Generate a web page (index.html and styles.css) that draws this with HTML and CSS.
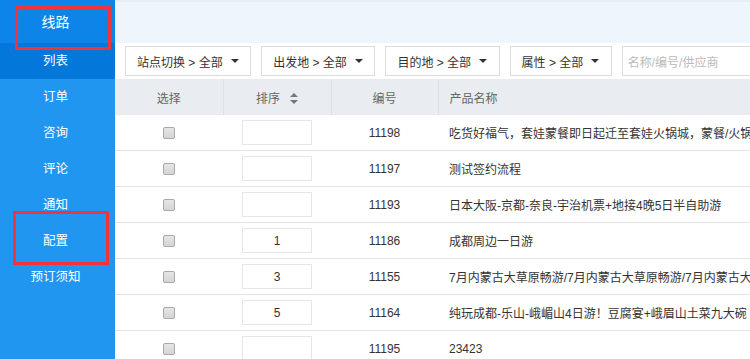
FILE: index.html
```html
<!DOCTYPE html>
<html lang="zh">
<head>
<meta charset="utf-8">
<title>线路列表</title>
<link rel="stylesheet" href="styles.css">
</head>
<body>
<div class="app">
  <nav class="sidebar">
    <div class="nav-head">线路</div>
    <div class="nav-item nav-active">列表</div>
    <div class="nav-item">订单</div>
    <div class="nav-item">咨询</div>
    <div class="nav-item">评论</div>
    <div class="nav-item">通知</div>
    <div class="nav-item">配置</div>
    <div class="nav-item">预订须知</div>
    <span class="mark mark-1"></span>
    <span class="mark mark-2"></span>
  </nav>
  <main class="main">
    <div class="topband"></div>
    <div class="filters">
      <div class="filter">站点切换 &gt; 全部<span class="caret"></span></div>
      <div class="filter">出发地 &gt; 全部<span class="caret"></span></div>
      <div class="filter">目的地 &gt; 全部<span class="caret"></span></div>
      <div class="filter">属性 &gt; 全部<span class="caret"></span></div>
      <div class="search">名称/编号/供应商</div>
    </div>
    <table class="grid">
      <colgroup>
        <col class="c1"><col class="c2"><col class="c3"><col class="c4">
      </colgroup>
      <thead>
        <tr>
          <th>选择</th>
          <th>排序<svg class="sort" width="8" height="11" viewBox="0 0 8 11"><path d="M4 0L8 4H0Z M4 11L0 7H8Z" fill="#777"/></svg></th>
          <th>编号</th>
          <th class="left">产品名称</th>
        </tr>
      </thead>
      <tbody>
        <tr><td><span class="cb"></span></td><td><span class="ord"></span></td><td>11198</td><td class="left">吃货好福气，套娃蒙餐即日起迁至套娃火锅城，蒙餐/火锅</td></tr>
        <tr><td><span class="cb"></span></td><td><span class="ord"></span></td><td>11197</td><td class="left">测试签约流程</td></tr>
        <tr><td><span class="cb"></span></td><td><span class="ord"></span></td><td>11193</td><td class="left">日本大阪-京都-奈良-宇治机票+地接4晚5日半自助游</td></tr>
        <tr><td><span class="cb"></span></td><td><span class="ord">1</span></td><td>11186</td><td class="left">成都周边一日游</td></tr>
        <tr><td><span class="cb"></span></td><td><span class="ord">3</span></td><td>11155</td><td class="left">7月内蒙古大草原畅游/7月内蒙古大草原畅游/7月内蒙古大</td></tr>
        <tr><td><span class="cb"></span></td><td><span class="ord">5</span></td><td>11164</td><td class="left">纯玩成都-乐山-峨嵋山4日游！豆腐宴+峨眉山土菜九大碗</td></tr>
        <tr><td><span class="cb"></span></td><td><span class="ord"></span></td><td>11195</td><td class="left">23423</td></tr>
      </tbody>
    </table>
  </main>
</div>
</body>
</html>
```

FILE: styles.css
```css
html, body {
  margin: 0;
  padding: 0;
  width: 750px;
  height: 359px;
  overflow: hidden;
  background: #fff;
}
body {
  font-family: "Liberation Sans", "Noto Sans CJK SC", sans-serif;
  font-size: 12px;
  color: #333;
}
.app {
  display: flex;
  height: 359px;
}
.sidebar {
  position: relative;
  width: 115px;
  flex: none;
  background: #2196f0;
  color: #fff;
}
.nav-head {
  height: 43px;
  line-height: 45px;
  text-align: center;
  font-size: 14px;
  background: #0c84e8;
  padding-right: 4px;
}
.nav-item {
  height: 36px;
  line-height: 36px;
  text-align: center;
  font-size: 12.5px;
  padding-right: 4px;
}
.nav-active {
  background: #0477db;
}
.mark {
  position: absolute;
  border: 3px solid #f2343a;
  box-sizing: border-box;
}
.mark-1 {
  left: 15px;
  top: 6px;
  width: 96px;
  height: 44px;
}
.mark-2 {
  left: 13px;
  top: 211px;
  width: 96px;
  height: 54px;
}
.main {
  flex: none;
  width: 635px;
  overflow: hidden;
  display: flex;
  flex-direction: column;
}
.main > * {
  flex: none;
}
.topband {
  height: 43px;
  background: #eef5fd;
  border-top: 2px solid #e8edf3;
  box-sizing: border-box;
}
.filters {
  display: flex;
  gap: 10px;
  height: 36px;
  align-items: center;
  padding-left: 10px;
}
.filter {
  flex: none;
  height: 30px;
  box-sizing: border-box;
  border: 1px solid #dcdcdc;
  display: flex;
  align-items: center;
  padding: 0 11.5px 0 11px;
  color: #333;
  white-space: nowrap;
}
.caret {
  width: 0;
  height: 0;
  border-left: 4px solid transparent;
  border-right: 4px solid transparent;
  border-top: 4px solid #333;
  margin-left: 8px;
}
.search {
  flex: none;
  height: 30px;
  width: 180px;
  box-sizing: border-box;
  border: 1px solid #dcdcdc;
  display: flex;
  align-items: center;
  padding-left: 5px;
  color: #bbb;
}
.grid {
  border-collapse: collapse;
  table-layout: fixed;
  width: 900px;
}
.c1 { width: 108px; }
.c2 { width: 108px; }
.c3 { width: 107px; }
.c4 { width: 577px; }
.grid th {
  height: 36px;
  background: #e9ecf0;
  color: #666;
  font-weight: normal;
  text-align: center;
  border-left: 1px solid #dde0e4;
  padding: 0;
}
.grid th:first-child { border-left: none; }
.grid td {
  height: 35px;
  text-align: center;
  border-bottom: 1px solid #e3e3e3;
  padding: 0;
  white-space: nowrap;
  overflow: hidden;
}
.grid .left {
  text-align: left;
  padding-left: 11px;
}
.sort {
  margin-left: 10px;
  vertical-align: -1px;
}
.cb {
  display: inline-block;
  width: 12px;
  height: 12px;
  box-sizing: border-box;
  border: 1px solid #a9a9a9;
  border-radius: 2px;
  background: linear-gradient(#e6e6e6, #d4d4d4);
  vertical-align: middle;
}
.ord {
  display: inline-block;
  width: 70px;
  height: 25px;
  line-height: 25px;
  box-sizing: border-box;
  border: 1px solid #e6e6e6;
  vertical-align: middle;
  color: #333;
}
```
